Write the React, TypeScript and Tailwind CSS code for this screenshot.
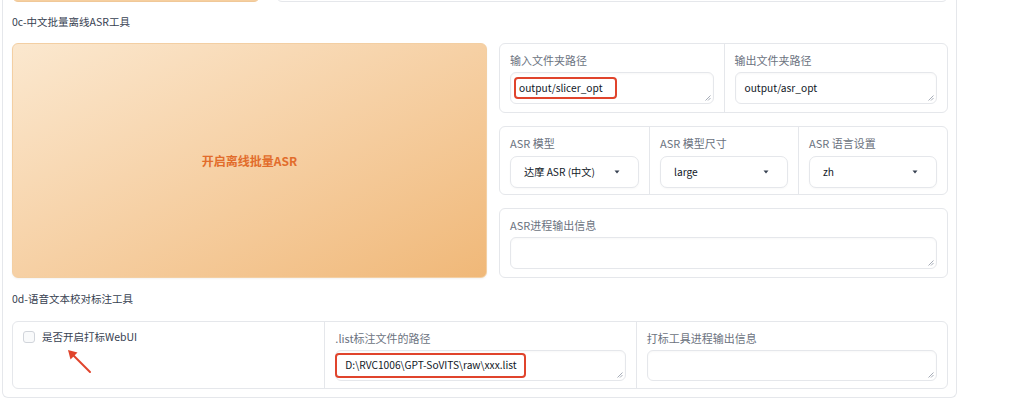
import React from 'react';

const Grip = () => (
  <svg width="7" height="7" viewBox="0 0 7 7" className="absolute right-[2px] bottom-[2px]">
    <path d="M6.5 1.5 L1.5 6.5 M6.5 4 L4 6.5" stroke="#9ca3af" strokeWidth="0.9" />
  </svg>
);

const Caret = () => (
  <svg width="6" height="4" viewBox="0 0 6 4">
    <path d="M0.5 0.5 H5.5 L3 3.5 Z" fill="#374151" />
  </svg>
);

const Label = ({ children }: { children: React.ReactNode }) => (
  <div className="text-[11px] leading-[14px] text-[#6b7280]">{children}</div>
);

const TextBox = ({ children, h = 'h-[32px]' }: { children?: React.ReactNode; h?: string }) => (
  <div className={`relative ${h} mt-[5px] rounded-[6px] border border-[#e5e7eb] bg-white shadow-[inset_0_1px_2px_rgba(0,0,0,0.03)] flex items-center text-[10.2px] text-[#111827]`}>
    {children}
    <Grip />
  </div>
);

const Select = ({ value }: { value: string }) => (
  <div className="mt-[6px] h-[32px] rounded-[7px] border border-[#e5e7eb] bg-white flex items-center justify-between pl-[13px] pr-[18px] text-[10.2px] text-[#111827] shadow-[0_1px_2px_rgba(0,0,0,0.03)]">
    <span>{value}</span>
    <Caret />
  </div>
);

export default function App() {
  return (
    <div
      className="w-[1024px] h-[411px] bg-white overflow-hidden"
      style={{ fontFamily: '"Noto Sans CJK SC", "Noto Sans", sans-serif' }}
    >
      <div className="ml-[2px] w-[955px] border-x border-b border-[#e5e7eb] rounded-b-[6px] pl-[9px] pr-[8px] pb-[8px]">
        {/* tail of the previous row */}
        <div className="flex gap-[16px] h-[2px] -mt-[6px]">
          <div className="w-[248px] h-[8px] rounded-b-[6px] bg-[#f6cf9f] border border-[#f0c898]" />
          <div className="flex-1 h-[8px] rounded-b-[6px] border border-[#e5e7eb]" />
        </div>

        <div className="mt-[18px] text-[10.5px] leading-[16px] text-[#374151]">0c-中文批量离线ASR工具</div>

        <div className="mt-[13px] flex gap-[12px]">
          <button className="w-[475px] h-[235px] rounded-[6px] border border-[#f3cfa3] bg-linear-to-br from-[#fbe8cf] to-[#f0b878] flex items-center justify-center text-[12px] font-bold text-[#e26c2b] shadow-[0_1px_2px_rgba(0,0,0,0.05)]">
            开启离线批量ASR
          </button>

          <div className="w-[449px] flex flex-col gap-[13px]">
            <div className="h-[70px] rounded-[6px] border border-[#e5e7eb] grid grid-cols-2">
              <div className="px-[10px] pt-[9px]">
                <Label>输入文件夹路径</Label>
                <TextBox>
                  <span className="ml-[3px] inline-flex items-center h-[22px] border-2 border-[#e0442c] rounded-[4px] pl-[3px] pr-[12px] leading-none">
                    output/slicer_opt
                  </span>
                </TextBox>
              </div>
              <div className="px-[10px] pt-[9px] border-l border-[#e5e7eb]">
                <Label>输出文件夹路径</Label>
                <TextBox>
                  <span className="pl-[9px]">output/asr_opt</span>
                </TextBox>
              </div>
            </div>

            <div className="h-[69px] rounded-[6px] border border-[#e5e7eb] grid grid-cols-3">
              <div className="px-[10px] pt-[9px]">
                <Label>ASR 模型</Label>
                <Select value="达摩 ASR (中文)" />
              </div>
              <div className="px-[10px] pt-[9px] border-l border-[#e5e7eb]">
                <Label>ASR 模型尺寸</Label>
                <Select value="large" />
              </div>
              <div className="px-[10px] pt-[9px] border-l border-[#e5e7eb]">
                <Label>ASR 语言设置</Label>
                <Select value="zh" />
              </div>
            </div>

            <div className="h-[70px] rounded-[6px] border border-[#e5e7eb] px-[10px] pt-[9px]">
              <Label>ASR进程输出信息</Label>
              <TextBox />
            </div>
          </div>
        </div>

        <div className="mt-[13px] text-[10.5px] leading-[16px] text-[#374151]">0d-语音文本校对标注工具</div>

        <div className="mt-[14px] h-[68px] rounded-[6px] border border-[#e5e7eb] grid grid-cols-3">
          <div className="relative px-[10px] pt-[8px]">
            <label className="flex items-center gap-[7px] text-[10.5px] leading-[14px] text-[#374151]">
              <span className="w-[12px] h-[12px] rounded-[3px] border border-[#d1d5db] bg-[#f9fafb]" />
              是否开启打标WebUI
            </label>
            <svg width="40" height="40" viewBox="0 0 40 40" className="absolute left-[41px] top-[15px]">
              <path d="M36 35 L17 16" stroke="#e0442c" strokeWidth="2" strokeLinecap="round" />
              <path d="M14 13 L23.5 15.5 L16.5 22.5 Z" fill="#e0442c" />
            </svg>
          </div>
          <div className="px-[10px] pt-[9px] border-l border-[#e5e7eb]">
            <Label>.list标注文件的路径</Label>
            <TextBox h="h-[31px]">
              <span className="-ml-px inline-flex items-center h-[25px] border-2 border-[#e0442c] rounded-[4px] pl-[8px] pr-[7px] leading-none">
                D:\RVC1006\GPT-SoVITS\raw\xxx.list
              </span>
            </TextBox>
          </div>
          <div className="px-[10px] pt-[9px] border-l border-[#e5e7eb]">
            <Label>打标工具进程输出信息</Label>
            <TextBox h="h-[31px]" />
          </div>
        </div>
      </div>
    </div>
  );
}
